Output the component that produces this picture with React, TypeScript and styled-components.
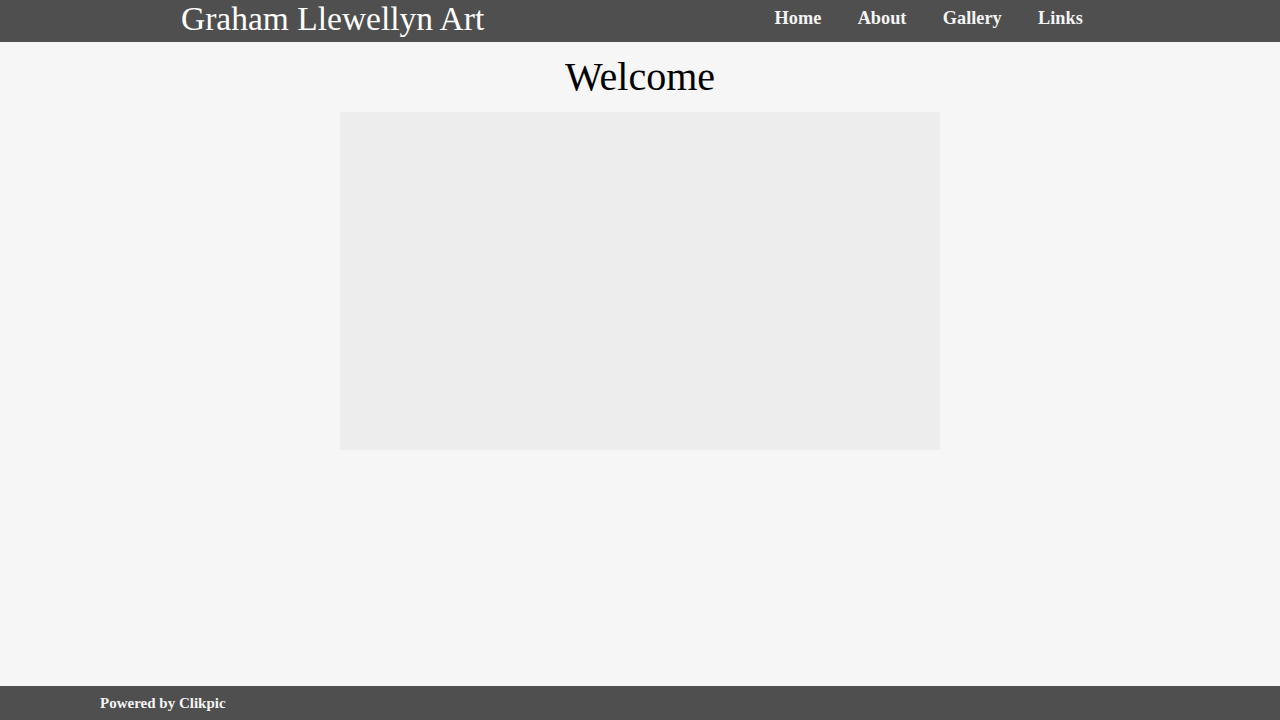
import styled, { createGlobalStyle } from 'styled-components';

const GlobalStyle = createGlobalStyle`
  html, body {
    margin: 0;
    padding: 0;
    height: 100%;
    background-color: #f6f6f6;
    font-family: "Liberation Serif", "Times New Roman", serif;
  }
  #root {
    min-height: 100vh;
    display: flex;
    flex-direction: column;
  }
`;

const Header = styled.header`
  background-color: #4f4f4f;
  height: 42px;
`;

const HeaderInner = styled.div`
  width: 922px;
  margin: 0 auto;
  height: 100%;
  display: flex;
  align-items: flex-start;
  justify-content: space-between;
`;

const SiteTitle = styled.h1`
  margin: 0;
  padding-left: 2px;
  font-size: 33.5px;
  font-weight: normal;
  color: #ffffff;
  line-height: 38px;
`;

const Nav = styled.nav`
  display: flex;
`;

const NavLink = styled.a`
  display: block;
  padding: 6px 18.2px;
  font-size: 18.3px;
  font-weight: bold;
  color: #f4f4f4;
  text-decoration: none;
  line-height: 24px;
  cursor: pointer;
`;

const Main = styled.main`
  flex: 1;
  display: flex;
  flex-direction: column;
  align-items: center;
`;

const Heading = styled.h2`
  margin: 12px 0 12px;
  font-size: 40px;
  font-weight: normal;
  color: #000;
  line-height: 46px;
`;

const Picture = styled.div`
  width: 600px;
  height: 338px;
  background-color: #ededed;
`;

const Footer = styled.footer`
  background-color: #4f4f4f;
  height: 34px;
`;

const FooterInner = styled.div`
  width: 1080px;
  margin: 0 auto;
  height: 100%;
  display: flex;
  align-items: center;
  font-size: 15px;
  font-weight: bold;
  color: #f4f4f4;
`;

const App = () => {
  const links = ['Home', 'About', 'Gallery', 'Links'];

  return (
    <>
      <GlobalStyle />
      <Header>
        <HeaderInner>
          <SiteTitle>Graham Llewellyn Art</SiteTitle>
          <Nav>
            {links.map((l) => (
              <NavLink key={l}>{l}</NavLink>
            ))}
          </Nav>
        </HeaderInner>
      </Header>
      <Main>
        <Heading>Welcome</Heading>
        <Picture />
      </Main>
      <Footer>
        <FooterInner>Powered by Clikpic</FooterInner>
      </Footer>
    </>
  );
};

export default App;
